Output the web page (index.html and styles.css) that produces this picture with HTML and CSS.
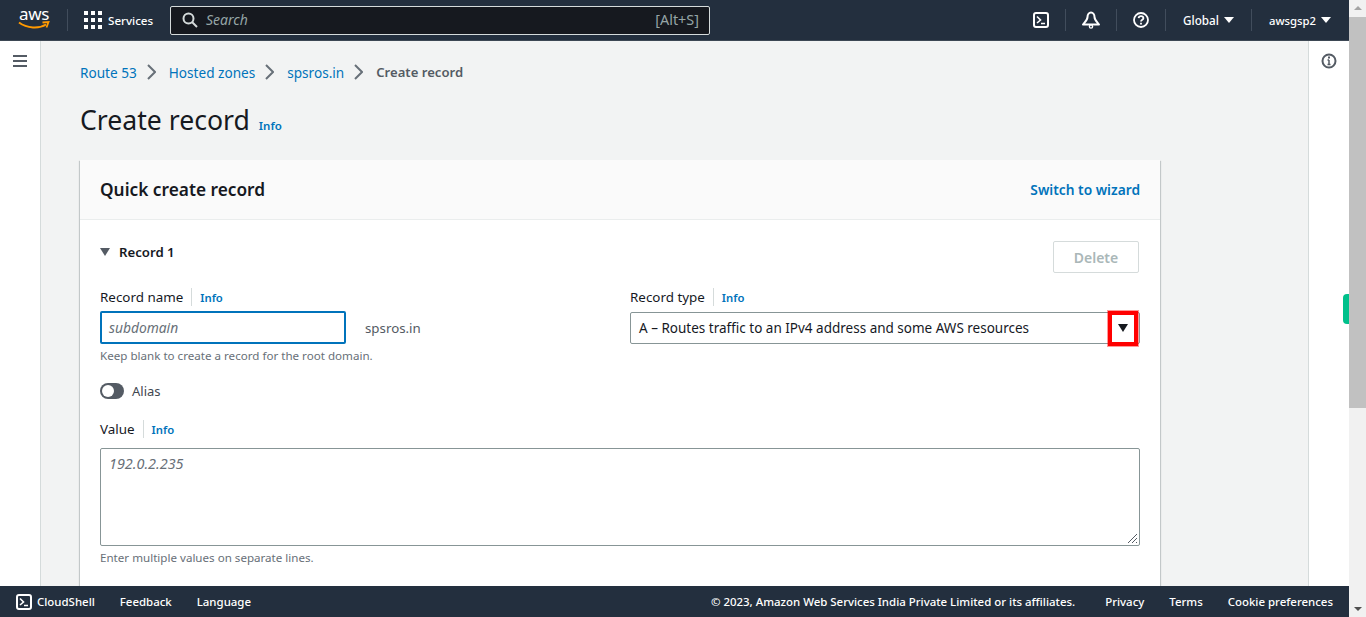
FILE: index.html
```html
<!DOCTYPE html>
<html lang="en">

<head>
  <meta charset="UTF-8">
  <title>Create record</title>
  <link rel="stylesheet" href="styles.css">
</head>

<body>
  <div class="page">
    <header class="topbar">
      <div class="logo">
        <span class="logo-text">aws</span>
        <svg class="logo-smile" width="32" height="9" viewBox="0 0 32 9">
          <path d="M1 1.5C9 7.5 21 8 28 3.5" fill="none" stroke="#f90" stroke-width="2" />
          <path d="M24.5 1.5L30.5 1L28.5 6.5" fill="none" stroke="#f90" stroke-width="1.8" />
        </svg>
      </div>
      <div class="services">
        <svg width="18" height="18" viewBox="0 0 18 18" fill="#fff">
          <rect x="0" y="0" width="4" height="4" /><rect x="7" y="0" width="4" height="4" /><rect x="14" y="0" width="4" height="4" />
          <rect x="0" y="7" width="4" height="4" /><rect x="7" y="7" width="4" height="4" /><rect x="14" y="7" width="4" height="4" />
          <rect x="0" y="14" width="4" height="4" /><rect x="7" y="14" width="4" height="4" /><rect x="14" y="14" width="4" height="4" />
        </svg>
        <span>Services</span>
      </div>
      <div class="search">
        <svg width="16" height="16" viewBox="0 0 16 16" fill="none" stroke="#d5dbdb" stroke-width="2">
          <circle cx="6.5" cy="6.5" r="5" />
          <path d="M10 10l5 5" />
        </svg>
        <span class="search-text">Search</span>
        <span class="search-key">[Alt+S]</span>
      </div>
      <div class="top-right">
        <div class="top-item top-shell">
          <svg width="16" height="16" viewBox="0 0 16 16" fill="none" stroke="#fff" stroke-width="2">
            <rect x="1" y="1" width="14" height="14" rx="2" />
            <path d="M4 4.5L7.5 8L4 11M8 11.5h4" stroke-width="1.6" />
          </svg>
        </div>
        <div class="top-item top-bell">
          <svg width="18" height="18" viewBox="0 0 18 18" fill="none" stroke="#fff" stroke-width="2">
            <path d="M9 1.500C7 1.500 5.500 3.500 5.500 6C5.500 9 3 11 1 13.500H17C15 11 12.500 9 12.500 6C12.500 3.500 11 1.500 9 1.500Z" stroke-linejoin="round" />
            <circle cx="9" cy="15.500" r="1.600" stroke-width="1.400" />
          </svg>
        </div>
        <div class="top-item top-help">
          <svg width="16" height="16" viewBox="0 0 16 16" fill="none" stroke="#fff" stroke-width="1.800">
            <circle cx="8" cy="8" r="7" />
            <path d="M5.600 6.200C5.800 4.800 6.800 4.200 8 4.200c1.400 0 2.400.8 2.400 2 0 1.600-2.400 1.600-2.400 3.300" />
            <path d="M8 10.800v1.800" />
          </svg>
        </div>
        <div class="top-item top-region">Global <span class="caret-white"></span></div>
        <div class="top-item top-user">awsgsp2 <span class="caret-white"></span></div>
      </div>
    </header>

    <div class="middle">
      <nav class="side-left">
        <svg width="14" height="12" viewBox="0 0 14 12" fill="#545b64">
          <rect width="14" height="2" /><rect y="5" width="14" height="2" /><rect y="10" width="14" height="2" />
        </svg>
      </nav>

      <main class="content">
        <div class="crumbs">
          <a>Route 53</a>
          <svg class="crumb-sep" width="9" height="16" viewBox="0 0 9 16"><path d="M1 1l7 7-7 7" /></svg>
          <a>Hosted zones</a>
          <svg class="crumb-sep" width="9" height="16" viewBox="0 0 9 16"><path d="M1 1l7 7-7 7" /></svg>
          <a>spsros.in</a>
          <svg class="crumb-sep" width="9" height="16" viewBox="0 0 9 16"><path d="M1 1l7 7-7 7" /></svg>
          <span class="crumb-current">Create record</span>
        </div>

        <div class="title-row">
          <h1>Create record</h1>
          <a class="info">Info</a>
        </div>

        <section class="card">
          <div class="card-head">
            <h2>Quick create record</h2>
            <a class="wizard">Switch to wizard</a>
          </div>
          <div class="card-body">
            <div class="record-head">
              <div class="record-title"><span class="caret-dark"></span>Record 1</div>
              <button class="delete">Delete</button>
            </div>

            <div class="record-fields">
              <div class="field-name">
                <div class="label"><span>Record name</span><a class="info">Info</a></div>
                <div class="name-row">
                  <div class="name-input">subdomain</div>
                  <span class="domain">spsros.in</span>
                </div>
                <div class="hint">Keep blank to create a record for the root domain.</div>
              </div>
              <div class="field-type">
                <div class="label"><span>Record type</span><a class="info">Info</a></div>
                <div class="type-select">
                  <span>A – Routes traffic to an IPv4 address and some AWS resources</span>
                  <span class="caret-select"></span>
                  <span class="highlight"></span>
                </div>
              </div>
            </div>

            <div class="alias">
              <span class="toggle"><span class="knob"></span></span>
              <span>Alias</span>
            </div>

            <div class="label"><span>Value</span><a class="info">Info</a></div>
            <div class="value-box">
              192.0.2.235
              <svg class="resize" width="11" height="11" viewBox="0 0 11 11" stroke="#545b64" stroke-width="1">
                <path d="M1 10L10 1M5 10l5-5M9 10l1-1" />
              </svg>
            </div>
            <div class="hint">Enter multiple values on separate lines.</div>
          </div>
        </section>
      </main>

      <aside class="side-right">
        <svg width="16" height="16" viewBox="0 0 16 16" fill="none" stroke="#545b64" stroke-width="2">
          <circle cx="8" cy="8" r="6.500" />
          <path d="M8 7v4.500M6.500 11.500h3M6.500 7H8" stroke-width="1.500" />
          <path d="M8 3.600v1.800" />
        </svg>
      </aside>
      <span class="green-tab"></span>
    </div>

    <footer class="footer">
      <div class="foot-left">
        <svg width="16" height="16" viewBox="0 0 16 16" fill="none" stroke="#fff" stroke-width="2">
          <rect x="1" y="1" width="14" height="14" rx="2" />
          <path d="M4 4.500L7.500 8L4 11M8 11.500h4" stroke-width="1.600" />
        </svg>
        <span class="foot-shell">CloudShell</span>
        <span class="foot-feedback">Feedback</span>
        <span class="foot-lang">Language</span>
      </div>
      <div class="foot-right">
        <span class="foot-copy">© 2023, Amazon Web Services India Private Limited or its affiliates.</span>
        <span class="foot-privacy">Privacy</span>
        <span class="foot-terms">Terms</span>
        <span>Cookie preferences</span>
      </div>
    </footer>
  </div>

  <div class="scrollbar">
    <span class="arrow-up"></span>
    <span class="thumb"></span>
    <span class="arrow-down"></span>
  </div>
</body>

</html>
```

FILE: styles.css
```css
* {
  box-sizing: border-box;
}

html,
body {
  height: 100%;
  margin: 0;
  overflow: hidden;
}

body {
  display: flex;
  font-family: "Noto Sans", "Open Sans", sans-serif;
  font-size: 13px;
  color: #16191f;
  background: #fff;
}

a {
  color: #0073bb;
}

.page {
  position: relative;
  width: 1349px;
  height: 617px;
  display: flex;
  flex-direction: column;
}

/* top bar */
.topbar {
  height: 41px;
  flex: none;
  display: flex;
  align-items: center;
  background: #232f3e;
  border-bottom: 1px solid #3d4754;
  color: #fff;
}

.logo {
  width: 49px;
  margin-left: 18px;
  height: 30px;
  display: flex;
  flex-direction: column;
  align-items: flex-start;
}

.logo-text {
  font-size: 17px;
  line-height: 17px;
  padding-left: 1px;
  letter-spacing: -0.3px;
}

.logo-smile {
  margin-top: -1px;
}

.services {
  height: 22px;
  display: flex;
  align-items: center;
  gap: 6px;
  padding-left: 16px;
  border-left: 1px solid #414d5c;
  font-size: 11.600px;
  font-weight: 500;
  width: 103px;
}

.search {
  width: 540px;
  height: 29px;
  display: flex;
  align-items: center;
  padding: 0 10px 1px 11px;
  background: #16191f;
  border: 1px solid #d5dbdb;
  border-radius: 2px;
  color: #95a5a6;
  font-size: 14px;
}

.search-text {
  margin-left: 8px;
  font-style: italic;
}

.search-key {
  margin-left: auto;
  font-size: 14.400px;
}

.top-right {
  margin-left: auto;
  display: flex;
  align-items: center;
  height: 22px;
  padding-right: 18px;
  font-size: 11.700px;
  font-weight: 500;
}

.top-item {
  height: 22px;
  display: flex;
  align-items: center;
  justify-content: center;
  gap: 5px;
  border-left: 1px solid #414d5c;
}

.top-shell {
  border-left: 0;
  width: 32px;
  justify-content: flex-start;
}

.top-bell {
  width: 51px;
}

.top-help {
  width: 49px;
}

.top-region {
  width: 86px;
}

.top-user {
  width: 80px;
  justify-content: flex-end;
  font-size: 11.300px;
}

.caret-white {
  width: 0;
  height: 0;
  border-left: 5px solid transparent;
  border-right: 5px solid transparent;
  border-top: 6px solid #fff;
}

/* middle */
.middle {
  position: relative;
  flex: 1;
  min-height: 0;
  display: flex;
  overflow: hidden;
}

.side-left {
  width: 41px;
  flex: none;
  padding: 14px 0 0 13px;
  background: #fff;
  border-right: 1px solid #d5dbdb;
}

.side-right {
  width: 41px;
  flex: none;
  padding: 12px 0 0 12px;
  background: #fff;
  border-left: 1px solid #d5dbdb;
}

.side-left svg,
.side-right svg {
  display: block;
}

.content {
  flex: 1;
  min-width: 0;
  padding: 0 148px 0 39px;
  background: #f2f3f3;
}

.crumbs {
  display: flex;
  align-items: center;
  height: 18px;
  margin-top: 22px;
  font-size: 13.600px;
}

.crumb-sep {
  margin: 0 13px 0 10px;
  fill: none;
  stroke: #687078;
  stroke-width: 2;
}

.crumb-current {
  color: #545b64;
  font-weight: 600;
  font-size: 13.100px;
}

.title-row {
  display: flex;
  align-items: baseline;
  gap: 9px;
  margin-top: 17px;
}

h1 {
  margin: 0;
  font-size: 26.600px;
  line-height: 44px;
  font-weight: 400;
}

.info {
  font-size: 11.500px;
  font-weight: 600;
}

.card {
  margin-top: 18px;
  background: #fff;
  box-shadow: 0 1px 1px 0 rgba(0, 28, 36, .3), 1px 1px 1px 0 rgba(0, 28, 36, .15), -1px 1px 1px 0 rgba(0, 28, 36, .15);
  height: 440px;
}

.card-head {
  height: 60px;
  display: flex;
  align-items: center;
  justify-content: space-between;
  padding: 0 20px;
  background: #fafafa;
  border-bottom: 1px solid #eaeded;
}

h2 {
  margin: 0;
  font-size: 17.300px;
  font-weight: 600;
}

.wizard {
  font-size: 13.750px;
  font-weight: 600;
}

.card-body {
  padding: 21px 20px 0;
}

.record-head {
  display: flex;
  justify-content: space-between;
  height: 32px;
}

.record-title {
  display: flex;
  align-items: center;
  height: 22px;
  font-size: 13.200px;
  font-weight: 600;
}

.caret-dark {
  width: 0;
  height: 0;
  margin-right: 9px;
  border-left: 5.500px solid transparent;
  border-right: 5.500px solid transparent;
  border-top: 8px solid #545b64;
}

.delete {
  width: 86px;
  height: 32px;
  margin-right: 1px;
  background: #fff;
  border: 1px solid #d5dbdb;
  border-radius: 2px;
  color: #aab7b8;
  font: 600 14px "Noto Sans", sans-serif;
}

.record-fields {
  display: grid;
  grid-template-columns: 510px 510px;
  column-gap: 20px;
  margin-top: 14px;
}

.label {
  display: flex;
  align-items: center;
  height: 20px;
  font-size: 13.400px;
  color: #16191f;
}

.label span {
  padding-right: 8px;
  border-right: 1px solid #d5dbdb;
  line-height: 18px;
}

.label .info {
  margin-left: 8px;
  font-size: 11.300px;
}

.name-row {
  display: flex;
  align-items: center;
  margin-top: 4px;
}

.name-input {
  width: 246px;
  height: 33px;
  padding-left: 7px;
  line-height: 30px;
  border: 2px solid #0073bb;
  border-radius: 2px;
  color: #687078;
  font-style: italic;
  font-size: 13.800px;
}

.domain {
  margin-left: 19px;
  color: #545b64;
  font-size: 13.300px;
}

.hint {
  margin-top: 4px;
  font-size: 11.600px;
  line-height: 16px;
  color: #687078;
}

.type-select {
  position: relative;
  height: 32px;
  margin-top: 5px;
  display: flex;
  align-items: center;
  padding-left: 8px;
  border: 1px solid #879596;
  border-radius: 2px;
  font-size: 13.500px;
}

.caret-select {
  position: absolute;
  right: 11px;
  top: 11px;
  width: 0;
  height: 0;
  border-left: 5.500px solid transparent;
  border-right: 5.500px solid transparent;
  border-top: 8px solid #16191f;
}

.highlight {
  position: absolute;
  right: 1px;
  top: -2px;
  width: 30px;
  height: 35px;
  border: 4px solid #f00;
  box-shadow: 0 0 0 1px rgba(255, 0, 0, .4);
}

.alias {
  display: flex;
  align-items: center;
  gap: 8px;
  margin-top: 17px;
  margin-bottom: 18px;
  height: 20px;
  color: #414750;
  font-size: 13px;
}

.toggle {
  width: 24px;
  height: 16px;
  padding: 2px;
  background: #545b64;
  border-radius: 8px;
}

.knob {
  display: block;
  width: 12px;
  height: 12px;
  background: #fff;
  border-radius: 50%;
}

.value-box {
  position: relative;
  height: 98px;
  margin-top: 9px;
  padding: 5px 8px;
  border: 1px solid #879596;
  border-radius: 2px;
  color: #687078;
  font-style: italic;
  font-size: 14.400px;
}

.resize {
  position: absolute;
  right: 1px;
  bottom: 1px;
}

/* footer */
.footer {
  height: 31px;
  flex: none;
  display: flex;
  align-items: center;
  justify-content: space-between;
  padding: 0 16px;
  background: #232f3e;
  color: #fff;
  font-size: 11.450px;
  font-weight: 500;
}

.foot-left,
.foot-right {
  display: flex;
  align-items: center;
}

.foot-shell {
  margin-left: 5px;
}

.foot-feedback {
  margin-left: 25px;
}

.foot-lang {
  margin-left: 25px;
}

.foot-privacy {
  margin-left: 30px;
}

.foot-terms {
  margin-left: 25px;
}

.foot-right span:last-child {
  margin-left: 25px;
}

.green-tab {
  position: absolute;
  right: 0;
  top: 253px;
  width: 6px;
  height: 30px;
  background: #00c08b;
  border-radius: 4px 0 0 4px;
}

/* fake browser scrollbar */
.scrollbar {
  width: 17px;
  height: 617px;
  flex: none;
  display: flex;
  flex-direction: column;
  align-items: center;
  background: #f1f1f1;
}

.thumb {
  width: 17px;
  height: 391px;
  margin-top: 7px;
  background: #c1c1c1;
}

.arrow-up,
.arrow-down {
  width: 0;
  height: 0;
  border-left: 4px solid transparent;
  border-right: 4px solid transparent;
}

.arrow-up {
  margin-top: 6px;
  border-bottom: 4px solid #a3a3a3;
}

.arrow-down {
  margin-top: auto;
  margin-bottom: 6px;
  border-top: 4px solid #505050;
}
```
